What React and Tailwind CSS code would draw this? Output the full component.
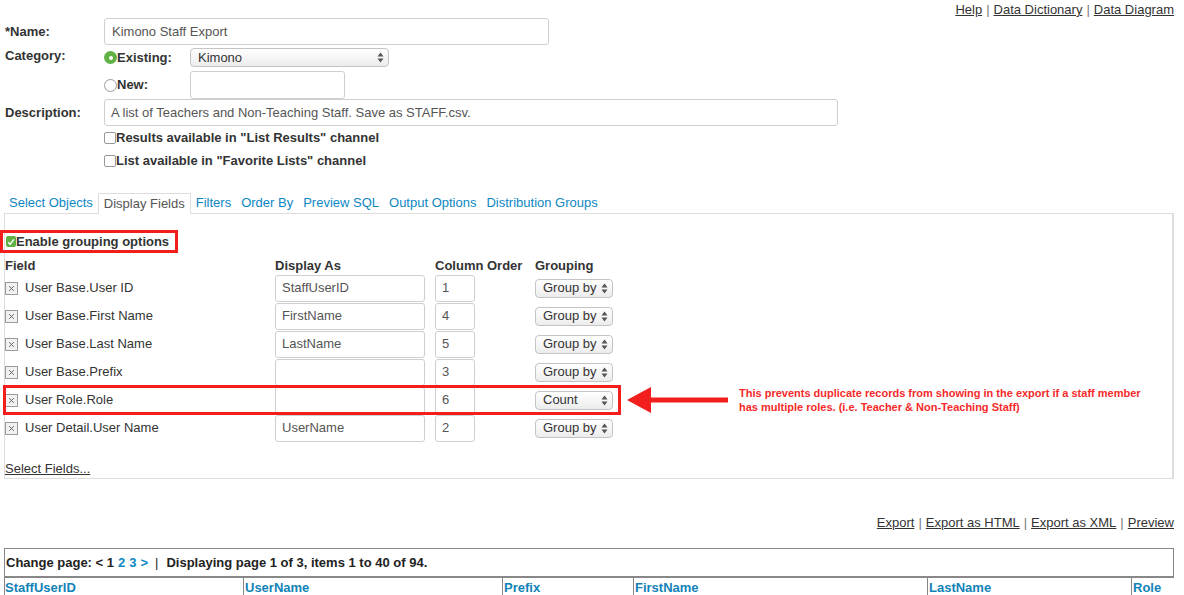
import React from "react";

const FONT = { fontFamily: '"Liberation Sans", Arial, sans-serif' };

const Arrows = () => (
  <svg width="7" height="11" viewBox="0 0 7 11" className="shrink-0">
    <path d="M3.5 0.5 L6.5 4.5 L0.5 4.5 Z" fill="#555" />
    <path d="M3.5 10.5 L6.5 6.5 L0.5 6.5 Z" fill="#555" />
  </svg>
);

const SelectBox = ({ value, className = "" }) => (
  <div
    className={`flex items-center justify-between rounded-[4px] border border-[#c4c4c4] bg-gradient-to-b from-white to-[#ececec] pl-[7px] pr-[4px] text-[13px] text-[#333] ${className}`}
  >
    <span>{value}</span>
    <Arrows />
  </div>
);

const TextBox = ({ value = "", className = "" }) => (
  <div
    className={`flex items-center rounded-[3px] border border-[#cfcfcf] bg-white px-[6px] text-[13px] text-[#555] ${className}`}
  >
    <span className="text-[#555]">{value}</span>
  </div>
);

const Radio = ({ on }) =>
  on ? (
    <span className="flex h-[13px] w-[13px] shrink-0 items-center justify-center rounded-full bg-[#5fb045]">
      <span className="h-[4px] w-[4px] rounded-full bg-white" />
    </span>
  ) : (
    <span className="h-[13px] w-[13px] shrink-0 rounded-full border border-[#9a9a9a] bg-white" />
  );

const Check = ({ on }) =>
  on ? (
    <span className="flex h-[11px] w-[10px] shrink-0 items-center justify-center rounded-[2px] bg-[#5fb045]">
      <svg width="8" height="8" viewBox="0 0 8 8">
        <path d="M1.2 4.3 L3.1 6.4 L6.8 1.4" stroke="white" strokeWidth="1.4" fill="none" />
      </svg>
    </span>
  ) : (
    <span className="h-[12px] w-[12px] shrink-0 rounded-[2px] border border-[#999] bg-white" />
  );

const RemoveIcon = () => (
  <svg width="13" height="13" viewBox="0 0 13 13" className="shrink-0">
    <rect x="0.5" y="0.5" width="12" height="12" fill="#f1f1f1" stroke="#9a9a9a" />
    <path d="M4.2 4.2 L8.8 8.8 M8.8 4.2 L4.2 8.8" stroke="#666" strokeWidth="1" />
  </svg>
);

const fields = [
  { name: "User Base.User ID", display: "StaffUserID", order: "1", group: "Group by" },
  { name: "User Base.First Name", display: "FirstName", order: "4", group: "Group by" },
  { name: "User Base.Last Name", display: "LastName", order: "5", group: "Group by" },
  { name: "User Base.Prefix", display: "", order: "3", group: "Group by" },
  { name: "User Role.Role", display: "", order: "6", group: "Count", note: true },
  { name: "User Detail.User Name", display: "UserName", order: "2", group: "Group by" },
];

const tabs = [
  "Select Objects",
  "Display Fields",
  "Filters",
  "Order By",
  "Preview SQL",
  "Output Options",
  "Distribution Groups",
];

const columns = [
  { label: "StaffUserID", w: "w-[239px]" },
  { label: "UserName", w: "w-[259px]" },
  { label: "Prefix", w: "w-[131px]" },
  { label: "FirstName", w: "w-[294px]" },
  { label: "LastName", w: "w-[204px]" },
  { label: "Role", w: "flex-1" },
];

const Sep = () => <span className="mx-[4px] text-[#777]">|</span>;

export default function App() {
  return (
    <div style={FONT} className="h-[595px] w-[1184px] overflow-hidden bg-white text-[13px] text-[#333]">
      {/* top links */}
      <div className="flex h-[18px] items-center justify-end pr-[10px] pt-[1px]">
        <a className="underline">Help</a>
        <Sep />
        <a className="underline">Data Dictionary</a>
        <Sep />
        <a className="underline">Data Diagram</a>
      </div>

      {/* form */}
      <div className="pl-[5px]">
        <div className="flex h-[27px] items-center">
          <div className="w-[99px] font-bold">*Name:</div>
          <TextBox value="Kimono Staff Export" className="h-[27px] w-[445px] px-[7px]" />
        </div>

        <div className="flex h-[26px] items-start pt-[3px]">
          <div className="w-[99px] font-bold leading-[15px]">Category:</div>
          <div className="mt-[2px] flex w-[86px] items-center font-bold leading-[15px]">
            <Radio on />
            <span>Existing:</span>
          </div>
          <SelectBox value="Kimono" className="h-[19px] w-[199px]" />
        </div>

        <div className="flex h-[28px] items-center">
          <div className="w-[99px]" />
          <div className="flex w-[86px] items-center font-bold">
            <Radio />
            <span>New:</span>
          </div>
          <TextBox className="h-[28px] w-[155px]" />
        </div>

        <div className="flex h-[27px] items-center">
          <div className="w-[99px] font-bold">Description:</div>
          <TextBox
            value="A list of Teachers and Non-Teaching Staff. Save as STAFF.csv."
            className="h-[27px] w-[734px]"
          />
        </div>

        <div className="ml-[99px] flex h-[23px] items-center font-bold">
          <Check />
          <span>Results available in "List Results" channel</span>
        </div>
        <div className="ml-[99px] flex h-[23px] items-center font-bold">
          <Check />
          <span>List available in "Favorite Lists" channel</span>
        </div>
      </div>

      {/* tabs */}
      <div className="mt-[21px] flex items-end pl-[4px]">
        {tabs.map((t) =>
          t === "Display Fields" ? (
            <div
              key={t}
              className="relative z-10 -mb-px flex h-[21px] items-center border border-b-0 border-[#ddd] bg-white px-[5px] text-[#555]"
            >
              {t}
            </div>
          ) : (
            <div key={t} className="flex h-[20px] items-center px-[5px] text-[#0d87c3]">
              {t}
            </div>
          )
        )}
      </div>

      {/* display fields panel */}
      <div className="ml-[4px] w-[1170px] border border-r-2 border-[#ddd] pt-[16px] pb-[1px]">
        <div className="-ml-[5px] flex h-[23px] w-[178px] items-center border-[3px] border-[#f21d1d] pl-[3px] font-bold">
          <Check on />
          <span>Enable grouping options</span>
        </div>

        <div className="flex h-[21px] items-end pb-[1px] font-bold leading-[15px]">
          <div className="w-[270px]">Field</div>
          <div className="w-[160px]">Display As</div>
          <div className="w-[100px]">Column Order</div>
          <div>Grouping</div>
        </div>

        {fields.map((f) => (
          <div key={f.name} className="relative flex h-[28px] items-center">
            <div className="flex w-[270px] items-center">
              <RemoveIcon />
              <span className="ml-[7px]">{f.name}</span>
            </div>
            <TextBox value={f.display} className="h-[27px] w-[150px]" />
            <TextBox value={f.order} className="ml-[10px] h-[27px] w-[40px]" />
            <SelectBox value={f.group} className="ml-[60px] h-[19px] w-[78px]" />
            {f.note && (
              <>
                <div className="pointer-events-none absolute -left-[2px] -top-[1px] h-[30px] w-[618px] border-[3px] border-[#f21d1d]" />
                <svg width="102" height="28" viewBox="0 0 102 28" className="ml-[14px] shrink-0">
                  <path d="M0 14 L24 1 L24 11.5 L101 11.5 L101 16.5 L24 16.5 L24 27 Z" fill="#f21d1d" />
                </svg>
                <div className="ml-[10px] text-[11px] font-bold leading-[14px] text-[#f52a2a]">
                  <div>This prevents duplicate records from showing in the export if a staff member</div>
                  <div>has multiple roles. (i.e. Teacher &amp; Non-Teaching Staff)</div>
                </div>
              </>
            )}
          </div>
        ))}

        <div className="mt-[19px] h-[16px] leading-[16px]">
          <a className="underline">Select Fields...</a>
        </div>
      </div>

      {/* export links */}
      <div className="mt-[36px] flex h-[16px] items-center justify-end pr-[10px]">
        <a className="underline">Export</a>
        <Sep />
        <a className="underline">Export as HTML</a>
        <Sep />
        <a className="underline">Export as XML</a>
        <Sep />
        <a className="underline">Preview</a>
      </div>

      {/* results */}
      <div className="ml-[4px] mt-[17px] w-[1170px]">
        <div className="flex h-[30px] items-center border border-b-2 border-[#888] pl-[1px] font-bold text-[#222]">
          <span>Change page: &lt; 1 </span>
          <span className="ml-[4px] text-[#0d87c3]">2</span>
          <span className="ml-[4px] text-[#0d87c3]">3</span>
          <span className="ml-[4px] text-[#0d87c3]">&gt;</span>
          <span className="ml-[7px] font-normal">|</span>
          <span className="ml-[8px]">Displaying page 1 of 3, items 1 to 40 of 94.</span>
        </div>
        <div className="flex h-[20px] font-bold text-[#1283b8]">
          {columns.map((c, i) => (
            <div
              key={c.label}
              className={`${c.w} flex items-center border-l border-[#888] ${i === 0 ? "pl-[0px]" : "pl-[1px]"}`}
            >
              {c.label}
            </div>
          ))}
        </div>
      </div>
    </div>
  );
}
